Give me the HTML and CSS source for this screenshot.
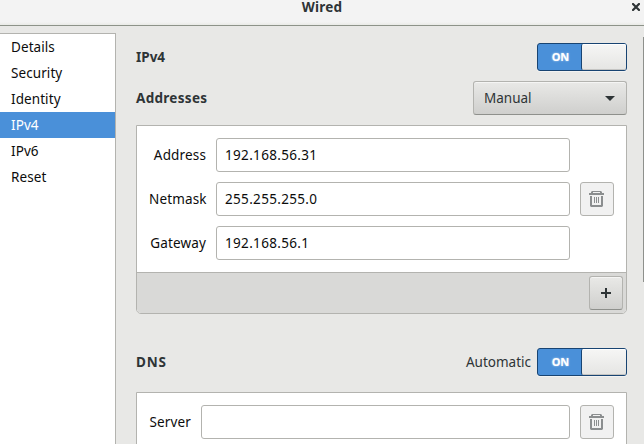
FILE: index.html
```html
<!DOCTYPE html>
<html lang="en">
<head>
<meta charset="utf-8">
<title>Wired</title>
<link rel="stylesheet" href="styles.css">
</head>
<body>
<svg class="defs" width="0" height="0" aria-hidden="true">
  <symbol id="trash" viewBox="0 0 16 16">
    <path fill="currentColor" fill-rule="evenodd" d="M0 2h2V1l1-1h9l1 1v1h2v2H0zM4 1v1h7V1z"/>
    <path fill="currentColor" d="M1 5h2v9h9V5h2v10l-1 1H2l-1-1z"/>
    <path fill="currentColor" d="M5 6h1v6H5zM7 6h1v6H7zM9 6h1v6H9z"/>
  </symbol>
</svg>
<div class="dialog">
  <header class="titlebar">
    <h1 class="title">Wired</h1>
    <svg class="close" width="8" height="8" viewBox="0 0 8 8"><path d="M1 1l6 6M7 1L1 7" stroke="#2e3436" stroke-width="2.200" stroke-linecap="square"/></svg>
  </header>
  <div class="main">
    <nav class="sidebar">
      <a class="item">Details</a>
      <a class="item">Security</a>
      <a class="item">Identity</a>
      <a class="item selected">IPv4</a>
      <a class="item">IPv6</a>
      <a class="item">Reset</a>
    </nav>
    <section class="content">
      <div class="row">
        <h2 class="heading">IPv4</h2>
        <div class="switch"><span class="on">ON</span><span class="knob"></span></div>
      </div>
      <div class="row addresses-row">
        <h2 class="heading addresses">Addresses</h2>
        <div class="select"><span>Manual</span><svg width="10" height="5" viewBox="0 0 10 5"><path d="M0 0h10L5 5z" fill="#2e3436"/></svg></div>
      </div>
      <div class="panel">
        <div class="form">
          <div class="field"><label>Address</label><div class="entry">192.168.56.31</div></div>
          <div class="field"><label>Netmask</label><div class="entry">255.255.255.0</div><div class="delete"><svg width="16" height="16"><use href="#trash"/></svg></div></div>
          <div class="field"><label>Gateway</label><div class="entry">192.168.56.1</div></div>
        </div>
        <div class="toolbar"><div class="add"><svg width="10" height="10" viewBox="0 0 10 10"><path d="M4 0h2v4h4v2H6v4H4V6H0V4h4z" fill="#2e3436"/></svg></div></div>
      </div>
      <div class="row dns-row">
        <h2 class="heading dns">DNS</h2>
        <span class="automatic">Automatic</span>
        <div class="switch"><span class="on">ON</span><span class="knob"></span></div>
      </div>
      <div class="panel dns-panel">
        <div class="form servers">
          <div class="field"><label>Server</label><div class="entry"></div><div class="delete"><svg width="16" height="16"><use href="#trash"/></svg></div></div>
        </div>
      </div>
    </section>
    <div class="scrollbar"></div>
  </div>
</div>
</body>
</html>
```
FILE: styles.css
```css
* { box-sizing: border-box; }
body { margin: 0; overflow: hidden; font: 13.5px/20px "Noto Sans", sans-serif; color: #2e3436; }
h1, h2 { margin: 0; font-size: 13.5px; font-weight: 700; line-height: 20px; }
svg { display: block; }
.defs { position: absolute; }
.dialog { display: flex; flex-direction: column; width: 644px; height: 444px; overflow: hidden; background: #e8e8e6; }
.titlebar { display: grid; grid-template-columns: 1fr auto 1fr; flex: none; height: 26px; background: linear-gradient(#f3f3f3 22px, #e9eae6 25px); border-bottom: 1px solid #8d9389; }
.title { grid-column: 2; height: 14px; line-height: 14px; letter-spacing: .25px; }
.close { justify-self: end; margin: 3px 4px 0 0; }
.main { display: flex; flex: 1; min-height: 0; }
.sidebar { width: 116px; margin-top: 7px; background: #fff; border: solid #b3b3af; border-width: 1px 1px 0 0; color: #0c0c0c; }
.item { display: block; height: 26px; padding: 3px 11px; letter-spacing: .08px; }
.selected { background: #4a90d9; color: #fff; }
.content { width: 491px; margin-left: 20px; padding-top: 17px; }
.row { display: flex; align-items: center; height: 28px; }
.heading { margin-right: auto; }
.addresses { letter-spacing: .3px; }
.dns { letter-spacing: .8px; }
.addresses-row { height: 34px; margin: 10px 0; }
.switch { display: flex; width: 90px; height: 28px; border: 1px solid #184472; border-radius: 3px; background: #4a90d9; box-shadow: 0 1px #f3f3f2; }
.on { width: 43px; padding-left: 2px; line-height: 26px; text-align: center; font-size: 11px; font-weight: 700; color: #fff; text-shadow: 0 0 2px #c9ddf2; }
.knob { flex: 1; border-left: 1px solid #184472; border-radius: 2px; background: linear-gradient(#f6f6f5, #e5e5e3); box-shadow: inset 0 1px #fff, inset 0 -1px #c4c4c2; }
.select { display: flex; align-items: center; justify-content: space-between; width: 154px; height: 34px; padding: 0 11px 0 10px; border: 1px solid #b3b3af; border-bottom-color: #8e908c; border-radius: 3px; background: linear-gradient(#e9e9e7, #cfcfcd); box-shadow: inset 0 1px #f5f5f4; }
.panel { border: 1px solid #b3b3af; border-radius: 0 0 5px 5px; background: #fff; color: #0c0c0c; }
.form { display: grid; gap: 10px; padding: 12px; }
.field { display: grid; grid-template-columns: 57px 354px 34px; column-gap: 10px; align-items: center; height: 34px; }
.field label { text-align: right; letter-spacing: .15px; }
.servers .field { grid-template-columns: 42px 369px 34px; }
.entry { height: 34px; padding: 6px 8px; border: 1px solid #b3b3af; border-radius: 3px; letter-spacing: .33px; }
.delete, .add { display: grid; place-items: center; width: 34px; height: 34px; border: 1px solid #b3b3af; border-radius: 3px; }
.delete { background: #f1f1f1; color: #8b8e8f; }
.toolbar { display: flex; justify-content: flex-end; height: 41px; padding: 3px; border-top: 1px solid #b3b3af; border-radius: 0 0 4px 4px; background: #d9d9d7; }
.add { border-bottom-color: #8e908c; background: linear-gradient(#e9e9e7, #cfcfcd); box-shadow: inset 0 1px #f5f5f4; }
.dns-row { margin: 34px 0 16px; }
.automatic { margin-right: 6px; }
.dns-panel { height: 80px; }
.scrollbar { width: 1px; height: 245px; margin: 11px 0 0 auto; background: #8e908c; }
```
